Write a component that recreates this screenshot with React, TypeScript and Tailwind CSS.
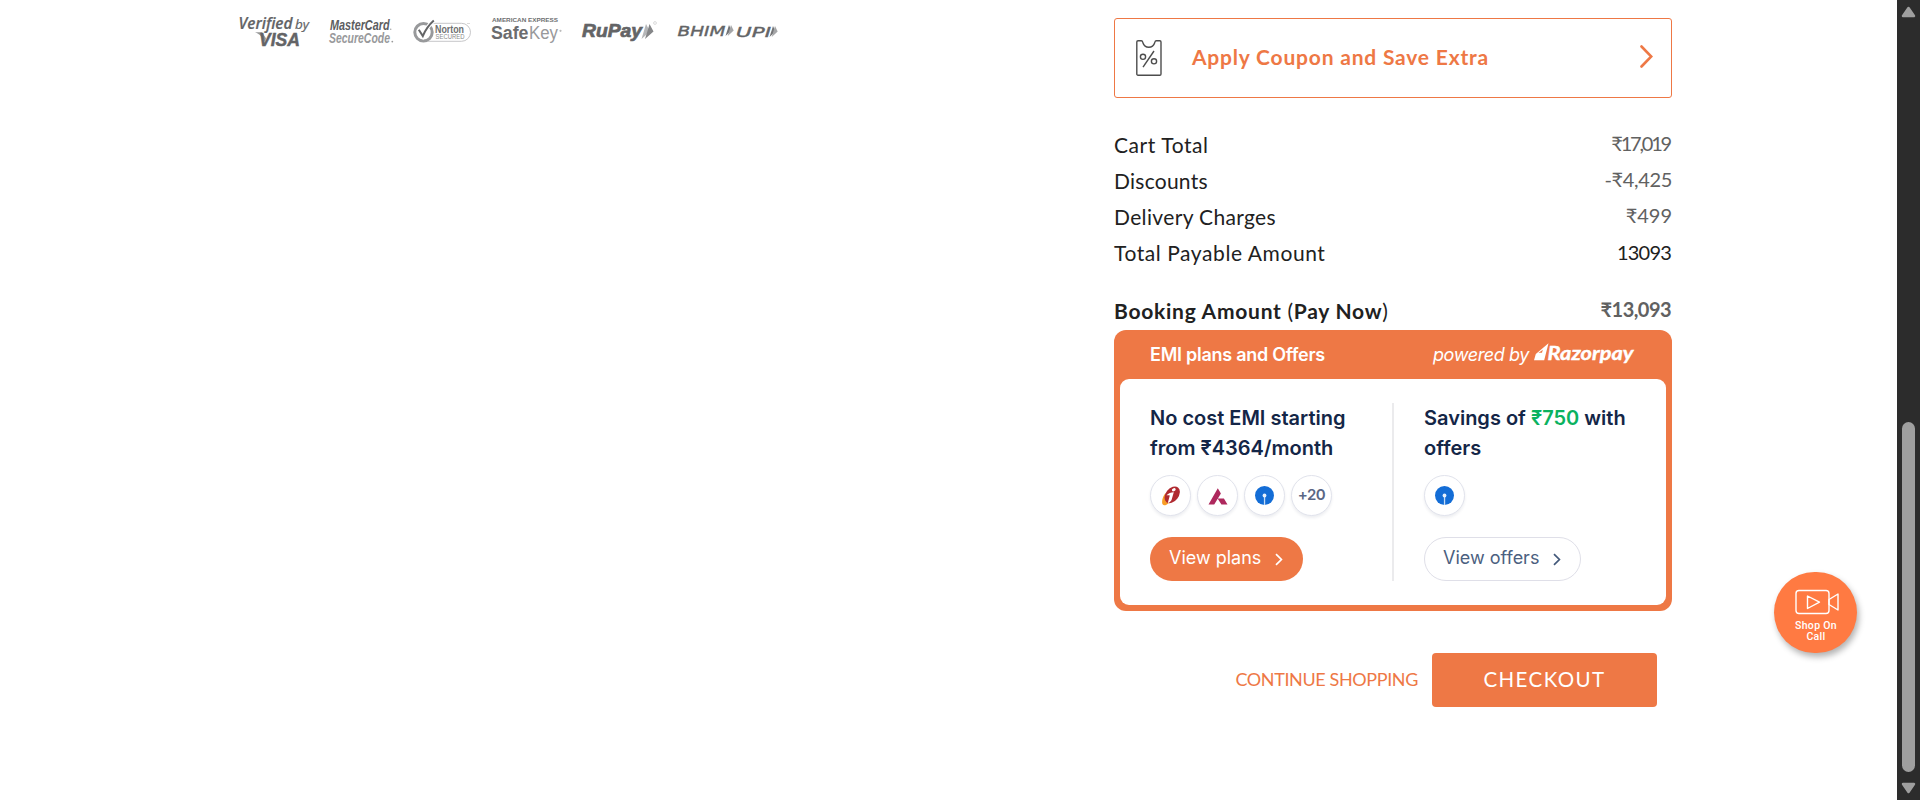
import type { ReactNode } from "react";

function FitText(props: {
  x: number;
  y: number;
  w: number;
  size: number;
  family?: string;
  weight?: number;
  italic?: boolean;
  fill?: string;
  stroke?: number;
  children: string;
}) {
  const { x, y, w, size, family = "Open Sans", weight = 700, italic, fill = "#636466", stroke = 0, children } = props;
  return (
    <text
      x={x}
      y={y}
      textLength={w}
      lengthAdjust="spacingAndGlyphs"
      fontSize={size}
      fontFamily={`${family}, sans-serif`}
      fontWeight={weight}
      fontStyle={italic ? "italic" : "normal"}
      fill={fill}
      stroke={stroke ? fill : "none"}
      strokeWidth={stroke}
    >
      {children}
    </text>
  );
}

function PaymentLogos() {
  return (
    <div className="flex">
      <svg width="90" height="36" viewBox="238 14 90 36" className="overflow-visible">
        <FitText x={238.500} y={28.500} w={54} size={15.500} weight={600} italic stroke={0.2}>Verified</FitText>
        <FitText x={295} y={28.500} w={14} size={13} weight={400} italic stroke={0.2}>by</FitText>
        <path d="M255 32.300h7l4 6-1 4c-2-5-5-8-10-10z" fill="#98999b" />
        <FitText x={259} y={45.800} w={41} size={19} family="Liberation Sans" weight={700} italic stroke={0.5}>VISA</FitText>
      </svg>
      <svg width="84" height="36" viewBox="328 14 84 36" className="overflow-visible">
        <FitText x={330} y={30} w={59.500} size={14.500} family="Liberation Sans" italic fill="#5c5d5f">MasterCard</FitText>
        <FitText x={329} y={42.500} w={61} size={14.500} family="Liberation Sans" italic fill="#98999b">SecureCode</FitText>
        <circle cx="390.700" cy="29.300" r=".8" fill="#aaa" />
        <circle cx="392.300" cy="41.600" r=".9" fill="#999" />
      </svg>
      <svg width="76" height="36" viewBox="412 14 76 36">
        <path d="M430 23.300H461.500a9 9 0 0 1 0 18H428" fill="none" stroke="#bfc0c2" strokeWidth=".9" />
        <circle cx="423.500" cy="32.300" r="8.700" fill="#fff" stroke="#98999b" strokeWidth="3" />
        <path d="M418.800 29.800l4 6.200c2.500-6 6-11 11-15.500" fill="none" stroke="#fff" strokeWidth="4" />
        <path d="M418.800 29.800l4 6.200c2.500-6 6-11 11-15.500" fill="none" stroke="#636466" strokeWidth="2" />
        <FitText x={435} y={33} w={29} size={10.500} family="Liberation Sans" fill="#6e6f71">Norton</FitText>
        <FitText x={435.500} y={39.300} w={29} size={6.300} family="Liberation Sans" weight={400} fill="#8a8b8d">SECURED</FitText>
        <path d="M467 23.500h3" stroke="#ccc" strokeWidth=".7" />
      </svg>
      <svg width="92" height="36" viewBox="488 14 92 36">
        <FitText x={492} y={22.300} w={66} size={4.600} family="Liberation Sans" fill="#6e6f71">AMERICAN EXPRESS</FitText>
        <FitText x={491} y={39} w={37.500} size={17.500} family="Liberation Sans" weight={700} fill="#6b6c6e">Safe</FitText>
        <FitText x={529} y={39} w={29} size={17.500} family="Liberation Sans" weight={400} fill="#98999b">Key</FitText>
        <circle cx="560.500" cy="30.800" r="1.100" fill="#bbb" />
      </svg>
      <svg width="96" height="36" viewBox="580 14 96 36">
        <FitText x={582} y={37} w={60} size={19} family="Liberation Sans" weight={700} italic stroke={0.7}>RuPay</FitText>
        <path d="M646 24l4 7.500-8.500 7.500z" fill="#b5b6b8" />
        <path d="M649.500 24l4 7.500-8.500 7.500 2.500-8z" fill="#858688" />
        <circle cx="655" cy="23" r="1.400" fill="none" stroke="#ccc" strokeWidth=".7" />
      </svg>
      <svg width="106" height="36" viewBox="676 14 106 36">
        <FitText x={677.500} y={35.800} w={48} size={14.800} family="DejaVu Sans" weight={400} italic stroke={0.4}>BHIM</FitText>
        <path d="M729 25l2.500 5.500-6 5.500z" fill="#737476" />
        <path d="M731 25l2.700 5.500-6 5.500z" fill="#a5a6a8" />
        <FitText x={736} y={36.500} w={35} size={14.800} family="DejaVu Sans" weight={400} italic stroke={0.4}>UPI</FitText>
        <path d="M773 26l2.500 5.500-6 5.500z" fill="#737476" />
        <path d="M775 26l2.700 5.500-6 5.500z" fill="#a5a6a8" />
      </svg>
    </div>
  );
}

function CouponIcon() {
  return (
    <svg width="26" height="36" viewBox="0 0 26 36" fill="none" stroke="#4d4d4d" strokeWidth="1.400">
      <path d="M2 .8H5.300C6.500.8 6.700 2 7 3c.8 2.600 3 4.200 5.800 4.200S17.800 5.600 18.600 3c.3-1 .5-2.200 1.700-2.200H23.800c.7 0 1.200.5 1.200 1.200V34c0 .7-.5 1.200-1.200 1.200H2c-.7 0-1.200-.5-1.200-1.200V2C.8 1.300 1.300.8 2 .8z" />
      <circle cx="7" cy="16.800" r="2.600" />
      <circle cx="18" cy="21.300" r="2.600" />
      <path d="M18 11L7 27.200" />
    </svg>
  );
}

function Chevron({ color, className }: { color: string; className?: string }) {
  return (
    <svg width="8" height="13" viewBox="0 0 8 13" className={className} fill="none" stroke={color} strokeWidth="1.700">
      <path d="M1 1.200l5.400 5.300L1 11.800" />
    </svg>
  );
}

function Row({ label, labelClass, value, valueClass }: { label: string; labelClass: string; value: string; valueClass: string }) {
  return (
    <div className="flex h-9 items-center justify-between whitespace-nowrap leading-9">
      <span className={labelClass}>{label}</span>
      <span className={valueClass}>{value}</span>
    </div>
  );
}

function Bubble({ children }: { children: ReactNode }) {
  return (
    <div className="flex size-[41px] items-center justify-center rounded-full border border-[#e1e3ec] bg-white shadow-[0_2px_3px_rgba(23,43,77,0.08)]">
      {children}
    </div>
  );
}

function IciciIcon() {
  return (
    <svg width="20" height="20" viewBox="0 0 20 20">
      <path d="M4.500 7C1.500 10.500.2 16.500 1.800 18.600c1 1.300 3.500.8 6-1.600L5 14z" fill="#f99d27" />
      <ellipse cx="11.200" cy="8.800" rx="6.400" ry="9.400" transform="rotate(38 11.200 8.800)" fill="#b02a30" />
      <ellipse cx="12.800" cy="3.800" rx="2" ry="1.500" transform="rotate(-30 12.800 3.800)" fill="#fff" />
      <path d="M5.500 9.300c2-2 4.300-3 7.300-3L10.700 13.500c-.4 1.600-1.800 2.800-3.900 3.500L8.800 9.600c-1-.6-2-.5-3.300-.3z" fill="#fff" />
    </svg>
  );
}

function AxisIcon() {
  return (
    <svg width="20" height="17" viewBox="0 0 20 17" className="mt-0.5" fill="#ae285d">
      <path d="M9.800.3l3.100 5.300L6.200 16.500H.5zM9.600 10.600h6.300l3.600 5.900h-6.100z" />
    </svg>
  );
}

function SbiIcon() {
  return (
    <svg width="19" height="19" viewBox="0 0 19 19">
      <circle cx="9.500" cy="9.500" r="9.500" fill="#136dd6" />
      <path d="M8.900 10h1.300v9H8.900z" fill="#c5dcf5" />
      <circle cx="9.500" cy="9.500" r="1.900" fill="#e6f0fb" />
    </svg>
  );
}

function EmiCard() {
  return (
    <section className="mt-px rounded-[12px] bg-[#ee7845] px-1.5 pb-1.5 font-['Inter',sans-serif]">
      <header className="flex h-[49px] items-center justify-between pl-[30px] pr-8 text-white">
        <h2 className="text-[18px] font-semibold tracking-[-0.26px]">EMI plans and Offers</h2>
        <div className="flex items-center">
          <span className="text-[18px] italic tracking-[-0.4px]">powered by</span>
          <svg width="102" height="30" viewBox="1533 340 102 30" className="ml-1 -mr-px">
            <path d="M1534 360.200l1.800-6.200 12.700-10.700-4.300 16.900h-4.200l2.800-10.500-4.400 3.300 4-.5-1.800 7.700z" fill="#fff" />
            <FitText x={1547.500} y={360.300} w={86} size={18.500} family="Lato" weight={700} italic fill="#fff" stroke={0.4}>Razorpay</FitText>
          </svg>
        </div>
      </header>
      <div className="flex h-[226px] rounded-[9px] bg-white py-6 pl-[30px]">
        <div className="w-[242px] shrink-0">
          <h3 className="text-[20px] font-semibold leading-[30px] text-[#142647]">
            No cost EMI starting
            <br />
            from ₹4364/month
          </h3>
          <div className="mt-3 flex gap-1.5">
            <Bubble><IciciIcon /></Bubble>
            <Bubble><AxisIcon /></Bubble>
            <Bubble><SbiIcon /></Bubble>
            <Bubble><span className="text-[15px] font-semibold tracking-[-0.5px] text-[#5a6785]">+20</span></Bubble>
          </div>
          <button className="mt-[21px] flex h-11 w-[153px] items-center rounded-full bg-[#ee7845] pl-[19px] text-[18px] text-white">
            <span className="pb-[3px]">View plans</span>
            <Chevron color="#fff" className="ml-3.5 mt-px" />
          </button>
        </div>
        <div className="w-0.5 bg-[#ebebed]" />
        <div className="pl-[30px]">
          <h3 className="text-[20px] font-semibold leading-[30px] text-[#142647]">
            Savings of <span className="text-[#0bb25f]">₹750</span> with
            <br />
            offers
          </h3>
          <div className="mt-3 flex">
            <Bubble><SbiIcon /></Bubble>
          </div>
          <button className="mt-[21px] flex h-11 w-[157px] items-center rounded-full border border-[#dfdfe8] pl-[18px] text-[18px] text-[#4b6080]">
            <span className="pb-[3px]">View offers</span>
            <Chevron color="#43597a" className="ml-3.5 mt-px" />
          </button>
        </div>
      </div>
    </section>
  );
}

function OrderSummary() {
  return (
    <div className="w-[558px] font-['Lato',sans-serif] text-[21px] text-[#212121]">
      <button className="flex h-20 w-full items-center rounded-[3px] border border-[#ee7845] pl-[21px] pr-[18px] text-[#ee7845]">
        <CouponIcon />
        <span className="ml-[30px] flex-1 pb-0.5 text-left font-bold tracking-[0.8px]">Apply Coupon and Save Extra</span>
        <svg width="13" height="23" viewBox="0 0 13 23" className="mb-1" fill="none" stroke="#ee7845" strokeWidth="2.600" strokeLinecap="round">
          <path d="M1.500 1.500l9.800 10-9.800 10" />
        </svg>
      </button>
      <div className="mt-[29px]">
        <Row label="Cart Total" labelClass="tracking-[0.57px]" value="₹17,019" valueClass="mr-[2px] pb-1 text-[20px] tracking-[-2.2px] text-[#616161]" />
        <Row label="Discounts" labelClass="tracking-[0.25px]" value="-₹4,425" valueClass="pb-1 text-[20px] tracking-[-0.35px] text-[#616161]" />
        <Row label="Delivery Charges" labelClass="tracking-[0.35px]" value="₹499" valueClass="pb-1 text-[20px] text-[#616161]" />
        <Row label="Total Payable Amount" labelClass="tracking-[0.57px]" value="13093" valueClass="mr-px pb-0.5 text-[20px] tracking-[-0.8px]" />
      </div>
      <div className="mt-[22px] flex h-9 items-center justify-between whitespace-nowrap font-bold leading-9">
        <span className="tracking-[0.74px]">
          Booking Amount <span className="font-normal">(</span>Pay Now<span className="font-normal">)</span>
        </span>
        <span className="mr-px pb-1 text-[20px] tracking-[-0.55px] text-[#616161]">₹13,093</span>
      </div>
      <EmiCard />
      <div className="mt-[42px] flex items-center justify-end pr-[15px]">
        <a className="mr-[14px] whitespace-nowrap pb-0.5 text-[18px] tracking-[-0.38px] text-[#ee7845]">CONTINUE SHOPPING</a>
        <button className="h-[54px] w-[225px] rounded-[4px] bg-[#ee7845] pb-0.5 text-[20.5px] tracking-[1.4px] text-white">CHECKOUT</button>
      </div>
    </div>
  );
}

function ShopOnCall() {
  return (
    <button className="absolute left-[1774px] top-[572px] flex h-[81px] w-[83px] flex-col items-center rounded-full bg-[#ff7a42] pt-[17px] font-['Roboto',sans-serif] text-[10.5px] font-medium leading-[11px] tracking-[0.3px] text-white shadow-[2px_4px_6px_rgba(0,0,0,0.3)]">
      <svg width="44" height="26" viewBox="0 0 44 26" fill="none" stroke="#fff" strokeWidth="1.400" strokeLinejoin="round" className="ml-[3px]">
        <rect x="1" y="1.500" width="33" height="23" rx="3" />
        <path d="M34 10.500l9-5.500v16l-9-5.500zM12.500 7v12.500l12-6.300z" />
      </svg>
      <span className="ml-px mt-[5px]">Shop On</span>
      <span className="ml-px">Call</span>
    </button>
  );
}

function Scrollbar() {
  return (
    <div className="flex h-full w-[23px] flex-col items-center bg-[#2c2c2c] py-1.5">
      <svg width="15" height="12" viewBox="0 0 15 12">
        <path d="M7.500 2L13 10H2z" fill="#9f9f9f" stroke="#9f9f9f" strokeWidth="2.500" strokeLinejoin="round" />
      </svg>
      <div className="mt-[404px] h-[351px] w-[13px] rounded-full bg-[#9f9f9f]" />
      <svg width="15" height="12" viewBox="0 0 15 12" className="mt-[10px]">
        <path d="M7.500 10L13 2H2z" fill="#9f9f9f" stroke="#9f9f9f" strokeWidth="2.500" strokeLinejoin="round" />
      </svg>
    </div>
  );
}

export default function App() {
  return (
    <div className="relative flex h-[800px] w-[1920px] overflow-hidden bg-white">
      <main className="flex flex-1 items-start pl-[238px]">
        <div className="w-[876px] pt-3.5">
          <PaymentLogos />
        </div>
        <div className="pt-[18px]">
          <OrderSummary />
        </div>
      </main>
      <Scrollbar />
      <ShopOnCall />
    </div>
  );
}
